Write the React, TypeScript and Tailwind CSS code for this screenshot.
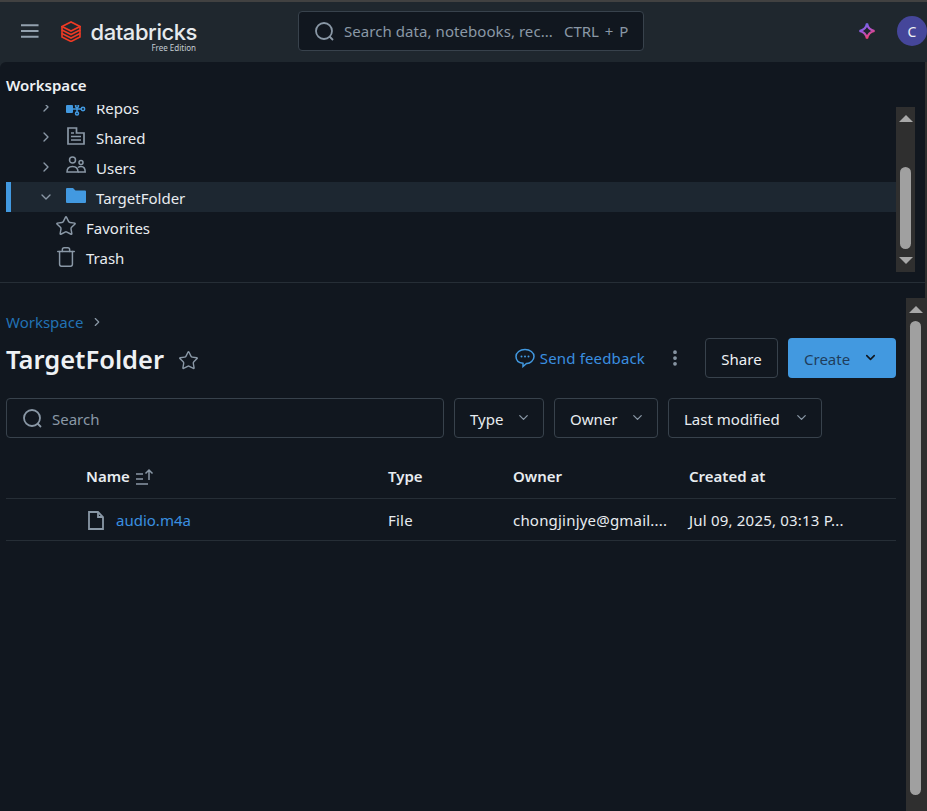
import { ChevronDown, ChevronRight, Star, Trash, MoreVertical } from 'lucide-react';

const font = "font-['Noto_Sans','Open_Sans',sans-serif]";

const Hamburger = () => (
  <svg width="18" height="14" viewBox="0 0 18 14" fill="none" stroke="#93a1ae" strokeWidth="2">
    <path d="M0 1h18M0 7h18M0 13h18" />
  </svg>
);

const Logo = () => (
  <svg width="20" height="21" viewBox="0 0 20 21" fill="none" stroke="#ee3a24" strokeWidth="1.600">
    <path d="M1 5.500 10 1l9 4.500L10 10 1 5.500Z" />
    <path d="M1 5.500V9l9 4.500L19 9V5.500" />
    <path d="M1 9v3.500L10 17l9-4.500V9" />
    <path d="M1 12.500V16l9 4.500 9-4.500v-3.500" />
  </svg>
);

const SearchIcon = () => (
  <svg width="19" height="19" viewBox="0 0 19 19" fill="none" stroke="#8a98a6" strokeWidth="1.800">
    <circle cx="9" cy="9" r="8" />
    <path d="M14.500 14.500 18 18" />
  </svg>
);

const Sparkle = () => (
  <svg width="18" height="18" viewBox="0 0 18 18" fill="none" strokeWidth="2.200">
    <defs>
      <linearGradient id="spark" x1="0" y1="0" x2="0.600" y2="1">
        <stop offset="0" stopColor="#4a72ea" />
        <stop offset="0.5" stopColor="#a455dc" />
        <stop offset="1" stopColor="#f5406a" />
      </linearGradient>
    </defs>
    <path d="M9 1.500c.8 4.400 2.800 6.600 7.500 7.500-4.700.9-6.700 3.100-7.500 7.500-.8-4.400-2.800-6.600-7.500-7.500 4.700-.9 6.700-3.100 7.500-7.500Z" stroke="url(#spark)" />
  </svg>
);

const SharedIcon = () => (
  <svg width="18" height="18" viewBox="0 0 18 18" fill="none" stroke="#8a98a6" strokeWidth="1.700">
    <path d="M1 1h8.500v5H17v11H1V1Z" />
    <path d="M4 6h3M4 9.500h10M4 13h10" />
  </svg>
);

const UsersIcon = () => (
  <svg width="20" height="17" viewBox="0 0 20 17" fill="none" stroke="#8a98a6" strokeWidth="1.500">
    <circle cx="6.500" cy="4" r="3" />
    <circle cx="15" cy="6.500" r="2" />
    <path d="M1 16c0-4 2.500-5.500 5.500-5.500S12 12 12 16H1Z" />
    <path d="M12 11.500c.8-.6 1.800-1 3-1 2.800 0 4.200 2 4.200 5.500H12" />
  </svg>
);

const RepoIcon = () => (
  <svg width="20" height="18" viewBox="0 0 20 18" fill="none">
    <rect x="0" y="7" width="7" height="8" rx="1" fill="#4299e0" />
    <g stroke="#4299e0" strokeWidth="1.500">
      <circle cx="11" cy="15.500" r="1.500" />
      <circle cx="17" cy="11" r="1.700" />
      <circle cx="11" cy="8" r="1.500" />
      <path d="M7 11h8M11 9v5" />
    </g>
  </svg>
);

const FolderIcon = () => (
  <svg width="20" height="15" viewBox="0 0 20 15">
    <path d="M0 1a1 1 0 0 1 1-1h6l2.500 2.500H19a1 1 0 0 1 1 1V14a1 1 0 0 1-1 1H1a1 1 0 0 1-1-1V1Z" fill="#4299e0" />
  </svg>
);

const FileIcon = () => (
  <svg width="16" height="19" viewBox="0 0 16 19" fill="none" stroke="#8a98a6" strokeWidth="1.800">
    <path d="M1 1h9l5 5v12H1V1Z" />
    <path d="M10 1v5h5" />
  </svg>
);

const SortIcon = () => (
  <svg width="19" height="17" viewBox="0 0 19 17" fill="none" stroke="#8a98a6" strokeWidth="1.500">
    <path d="M1 6h7M1 11h7M1 16h12" />
    <path d="M14 12V2M10.500 5.500 14 2l3.500 3.500" />
  </svg>
);

const FeedbackIcon = () => (
  <svg width="20" height="20" viewBox="0 0 20 20" fill="none">
    <path d="M10 1.500c5 0 9 3 9 7s-4 7-7 7h-.5L8 18.500v-3.200C4 14.800 1 12.300 1 8.500c0-4 4-7 9-7Z" stroke="#4299e0" strokeWidth="1.500" />
    <circle cx="6.500" cy="8.500" r="1" fill="#4299e0" />
    <circle cx="10" cy="8.500" r="1" fill="#4299e0" />
    <circle cx="13.500" cy="8.500" r="1" fill="#4299e0" />
  </svg>
);

const TreeRow = ({
  label,
  icon,
  chevron,
  active,
}: {
  label: string;
  icon: React.ReactNode;
  chevron: 'right' | 'down';
  active?: boolean;
}) => (
  <div className={`flex h-[30px] items-center ${active ? 'bg-[#1d2731]' : ''}`}>
    <div className={`h-full w-[5px] shrink-0 ${active ? 'bg-[#4299e0]' : ''}`} />
    <div className="flex w-[50px] shrink-0 items-center pl-[27px] text-[#8a98a6]">
      {chevron === 'right' ? <ChevronRight size={16} strokeWidth={2} /> : <ChevronDown size={16} strokeWidth={2} />}
    </div>
    <div className="flex w-[30px] shrink-0 justify-center">{icon}</div>
    <span className="pl-[5px] pt-[2px] text-[15px] text-[#e8ecf0]">{label}</span>
  </div>
);

const LeafRow = ({ label, icon }: { label: string; icon: React.ReactNode }) => (
  <div className="flex h-[30px] items-center pl-[50px]">
    <div className="flex w-[20px] shrink-0 justify-center">{icon}</div>
    <span className="pl-[10px] pt-[2px] text-[15px] text-[#e8ecf0]">{label}</span>
  </div>
);

const FilterButton = ({ label, width }: { label: string; width: string }) => (
  <button className={`flex h-10 items-center justify-between rounded border border-[#38424c] pl-[15px] pr-[12px] text-[15px] text-[#e8ecf0] ${width}`}>
    <span className="pt-[2px]">{label}</span>
    <ChevronDown size={15} strokeWidth={2} className="-mt-[2px] text-[#8a98a6]" />
  </button>
);

export default function App() {
  return (
    <div className={`flex h-[811px] w-[927px] flex-col overflow-hidden bg-[#1f272e] ${font}`}>
      <div className="h-[2px] shrink-0 bg-[#414141]" />
      <header className="flex h-[60px] shrink-0 items-center pb-[2px] pl-[21px]">
        <Hamburger />
        <div className="ml-[22px]">
          <Logo />
        </div>
        <div className="ml-[10px] flex w-[107px] flex-col pt-[12px]">
          <span className="font-['Inter',sans-serif] text-[22px] font-medium leading-[22px] tracking-[-0.45px] text-[#e6eaed]">databricks</span>
          <span className="mr-[1px] self-end text-[8px] leading-[10px] text-[#c4ccd3]">Free Edition</span>
        </div>
        <div className="ml-[101px] flex h-10 w-[346px] shrink-0 items-center rounded border border-[#38424c] bg-[#11171f] pl-[16px] text-[#8a98a6]">
          <SearchIcon />
          <span className="ml-[10px] text-[15px] tracking-[0.06px]">Search data, notebooks, rec...</span>
          <span className="ml-[11px] text-[15px] [word-spacing:2px]">CTRL + P</span>
        </div>
        <div className="ml-[214px] flex">
          <Sparkle />
        </div>
        <div className="ml-[21px] flex h-[30px] w-[30px] shrink-0 items-center justify-center rounded-full bg-[#45469a] text-[14px] text-[#eef1f4]">
          C
        </div>
      </header>

      <main className="flex min-h-0 flex-1 flex-col rounded-tl-[6px] bg-[#11171f]">
        <div className="shrink-0 border-r-2 border-[#2f2f2f]">
          <div className="h-[43px] pl-[6px] pt-[11px] text-[15px] font-semibold leading-[24px] text-[#eef1f4]">Workspace</div>
          <div className="flex h-[177px] pl-[6px] pr-[10px]">
            <div className="h-full min-w-0 flex-1 overflow-hidden">
              <div className="-mt-[13px]">
                <TreeRow label="Repos" icon={<RepoIcon />} chevron="right" />
                <TreeRow label="Shared" icon={<span className="-mt-[3px]"><SharedIcon /></span>} chevron="right" />
                <TreeRow label="Users" icon={<span className="-mt-[5px]"><UsersIcon /></span>} chevron="right" />
                <TreeRow label="TargetFolder" icon={<span className="-mt-[3px]"><FolderIcon /></span>} chevron="down" active />
                <LeafRow label="Favorites" icon={<Star size={22} strokeWidth={1.600} className="-mt-[2px] shrink-0 text-[#8a98a6]" />} />
                <LeafRow label="Trash" icon={<Trash size={22} strokeWidth={1.600} className="-mt-[1px] shrink-0 text-[#8a98a6]" />} />
              </div>
            </div>
            <div className="mt-[2px] flex h-[165px] w-[19px] shrink-0 flex-col items-center bg-[#2f2f2f]">
              <div className="mt-[8px] h-0 w-0 border-x-[7px] border-b-[7px] border-x-transparent border-b-[#a8a8a8]" />
              <div className="mt-[45px] h-[82px] w-[11px] rounded-[6px] bg-[#a0a0a0]" />
              <div className="mt-[8px] h-0 w-0 border-x-[7px] border-t-[7px] border-x-transparent border-t-[#a8a8a8]" />
            </div>
          </div>
          <div className="h-px bg-[#262e36]" />
          <div className="h-[15px]" />
        </div>
        <div className="flex min-h-0 flex-1 pl-[6px]">
          <div className="min-w-0 flex-1 pr-[10px] pt-[15px]">
            <div className="flex h-[18px] items-center text-[15px] text-[#2272b4]">
              Workspace
              <ChevronRight size={14} strokeWidth={2} className="ml-[7px] text-[#8a98a6]" />
            </div>
            <div className="mt-[7px] flex h-10 items-center">
              <h1 className="pt-[3px] text-[25.5px] font-semibold text-[#eef1f4]">TargetFolder</h1>
              <Star size={21} strokeWidth={1.600} className="ml-[14px] mt-[5px] text-[#8a98a6]" />
              <div className="ml-auto flex items-center">
                <FeedbackIcon />
                <span className="ml-[5px] pt-[1px] text-[15px] tracking-[0.15px] text-[#3a8fe0]">Send feedback</span>
                <MoreVertical size={20} strokeWidth={2.500} className="ml-[20px] text-[#8a98a6]" />
                <button className="ml-[20px] h-10 w-[73px] rounded border border-[#38424c] pt-[2px] text-[15px] text-[#eef1f4]">Share</button>
                <button className="ml-[10px] flex h-10 w-[108px] items-center rounded bg-[#4299e0] pl-[16px] text-[15px] text-[#1f3d5c]">
                  <span className="pt-[2px]">Create</span>
                  <ChevronDown size={15} strokeWidth={2.500} className="ml-[13px] -mt-[2px] text-[#11171f]" />
                </button>
              </div>
            </div>
            <div className="mt-[20px] flex gap-[10px]">
              <div className="flex h-10 w-[438px] items-center rounded border border-[#38424c] pl-[16px] text-[#8a98a6]">
                <SearchIcon />
                <span className="ml-[10px] pt-[2px] text-[15px]">Search</span>
              </div>
              <FilterButton label="Type" width="w-[90px]" />
              <FilterButton label="Owner" width="w-[104px]" />
              <FilterButton label="Last modified" width="w-[154px]" />
            </div>
            <div className="mt-[17px] grid h-[44px] grid-cols-[80px_302px_125px_176px_1fr] items-center border-b border-[#262e36] text-[15px] font-semibold text-[#e8ecf0]">
              <div />
              <div className="flex items-center">
                Name
                <span className="ml-[5px] flex"><SortIcon /></span>
              </div>
              <div>Type</div>
              <div>Owner</div>
              <div>Created at</div>
            </div>
            <div className="grid h-[42px] grid-cols-[80px_302px_125px_176px_1fr] items-center border-b border-[#262e36] pt-[1px] text-[15px] tracking-[0.2px] text-[#e8ecf0]">
              <div />
              <div className="flex items-center">
                <span className="ml-[2px] flex"><FileIcon /></span>
                <span className="ml-[12px] tracking-normal text-[#3a8fe0]">audio.m4a</span>
              </div>
              <div>File</div>
              <div>chongjinjye@gmail....</div>
              <div>Jul 09, 2025, 03:13 P...</div>
            </div>
          </div>
          <div className="flex h-[513px] w-[21px] shrink-0 flex-col items-center bg-[#2f2f2f] pr-[2px]">
            <div className="mt-[8px] h-0 w-0 border-x-[7px] border-b-[7px] border-x-transparent border-b-[#a8a8a8]" />
            <div className="mt-[8px] h-[474px] w-[11px] rounded-[6px] bg-[#a0a0a0]" />
          </div>
        </div>
      </main>
    </div>
  );
}
